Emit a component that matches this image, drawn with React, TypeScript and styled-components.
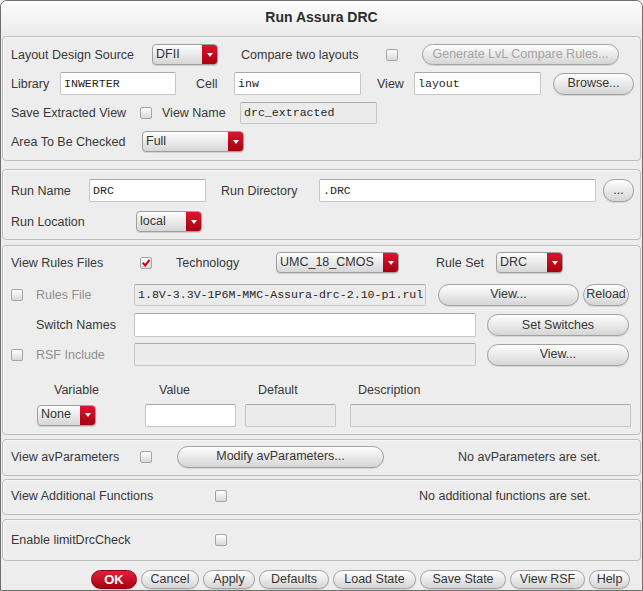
import React from 'react';
import styled, { createGlobalStyle, css } from 'styled-components';

const GlobalStyle = createGlobalStyle`
  html, body {
    margin: 0;
    padding: 0;
    background: #ededed;
    overflow: hidden;
  }
`;

const Window = styled.div`
  width: 643px;
  height: 591px;
  box-sizing: border-box;
  border: 1px solid #6e6e6e;
  border-radius: 7px 7px 0 0;
  background: #ededed;
  overflow: hidden;
  display: flex;
  flex-direction: column;
  font-family: 'Liberation Sans', Arial, sans-serif;
  font-size: 12.5px;
  color: #383838;
`;

const TitleBar = styled.div`
  height: 33px;
  flex: none;
  display: flex;
  align-items: center;
  justify-content: center;
  padding-bottom: 2px;
  box-sizing: border-box;
  background: linear-gradient(#fdfdfd, #ebebeb);
  font-size: 14px;
  font-weight: bold;
  color: #2c2c2c;
`;

const Body = styled.div`
  padding: 2px 1px 0;
  display: flex;
  flex-direction: column;
`;

const Frame = styled.section<{ $h: number; $mt?: number; $pt?: number }>`
  height: ${({ $h }) => $h}px;
  margin-top: ${({ $mt }) => $mt ?? 0}px;
  padding: ${({ $pt }) => $pt ?? 0}px 8px 0;
  box-sizing: border-box;
  border: 1px solid #bdbdbd;
  border-radius: 4px;
  box-shadow: inset 1px 1px 0 #f8f8f8;
  display: flex;
  flex-direction: column;
`;

const Row = styled.div<{ $h: number; $mt?: number }>`
  height: ${({ $h }) => $h}px;
  margin-top: ${({ $mt }) => $mt ?? 0}px;
  display: flex;
  align-items: center;
  flex: none;
`;

const Label = styled.span<{ $w?: number; $ml?: number; $dim?: boolean }>`
  flex: none;
  ${({ $w }) =>
    $w !== undefined &&
    css`
      width: ${$w}px;
    `}
  margin-left: ${({ $ml }) => $ml ?? 0}px;
  white-space: nowrap;
  color: ${({ $dim }) => ($dim ? '#8e8e8e' : '#383838')};
`;

const Field = styled.div<{ $w: number; $h?: number; $ml?: number; $off?: boolean }>`
  flex: none;
  width: ${({ $w }) => $w}px;
  height: ${({ $h }) => $h ?? 23}px;
  margin-left: ${({ $ml }) => $ml ?? 0}px;
  box-sizing: border-box;
  padding: 0 3px;
  border: 1px solid #c6c6c6;
  border-top-color: #a8a8a8;
  border-radius: 2px;
  background: ${({ $off }) => ($off ? '#ebebeb' : '#ffffff')};
  display: flex;
  align-items: center;
  white-space: nowrap;
  overflow: hidden;
  font-family: 'Liberation Mono', 'DejaVu Sans Mono', monospace;
  font-size: 11.6px;
  color: #262626;
`;

const Combo = styled.div<{ $w: number; $ml?: number }>`
  flex: none;
  width: ${({ $w }) => $w}px;
  height: 21px;
  margin-left: ${({ $ml }) => $ml ?? 0}px;
  box-sizing: border-box;
  display: flex;
  border: 1px solid #9e9e9e;
  border-radius: 4px;
  overflow: hidden;
  background: linear-gradient(#fdfdfd, #d6d6d6);
  box-shadow: 0 1px 0 rgba(0, 0, 0, 0.12);
`;

const ComboText = styled.span`
  flex: 1;
  padding: 0 0 2px 3px;
  display: flex;
  align-items: center;
  color: #333;
`;

const ComboArrow = styled.span`
  width: 15px;
  flex: none;
  background: linear-gradient(#dc1430, #a6000e);
  display: flex;
  align-items: center;
  justify-content: center;

  &::after {
    content: '';
    width: 0;
    height: 0;
    border-left: 3.5px solid transparent;
    border-right: 3.5px solid transparent;
    border-top: 4px solid #ffffff;
  }
`;

const Box = styled.span<{ $ml?: number }>`
  flex: none;
  width: 12px;
  height: 12px;
  margin-left: ${({ $ml }) => $ml ?? 0}px;
  box-sizing: border-box;
  border: 1px solid #a4a4a4;
  border-radius: 2px;
  background: linear-gradient(#ffffff, #d8d8d8);
  display: flex;
  align-items: center;
  justify-content: center;
`;

const Button = styled.button<{ $w: number; $h?: number; $ml?: number; $off?: boolean; $primary?: boolean }>`
  flex: none;
  width: ${({ $w }) => $w}px;
  height: ${({ $h }) => $h ?? 22}px;
  margin: 0 0 0 ${({ $ml }) => $ml ?? 0}px;
  padding: 0 0 1px;
  box-sizing: border-box;
  border: 1px solid #a2a2a2;
  border-radius: 11px;
  background: linear-gradient(#fefefe, #d5d5d5);
  box-shadow: 0 1px 0 rgba(0, 0, 0, 0.1);
  font-family: 'Liberation Sans', Arial, sans-serif;
  font-size: 12.5px;
  color: ${({ $off }) => ($off ? '#a3a3a3' : '#363636')};
  white-space: nowrap;
  cursor: default;

  ${({ $primary }) =>
    $primary &&
    css`
      border-color: #8a0010;
      background: linear-gradient(#e3213a, #a9000f);
      color: #ffffff;
      font-weight: bold;
      font-size: 13px;
    `}
`;

const Note = styled.span<{ $ml: number }>`
  margin-left: ${({ $ml }) => $ml}px;
  white-space: nowrap;
  color: #383838;
`;

const ButtonBar = styled.div`
  margin-top: 9px;
  height: 19px;
  display: flex;
  justify-content: flex-end;
  gap: 4px;
  padding-right: 11px;
`;

function Select({ w, ml, value }: { w: number; ml?: number; value: string }) {
  return (
    <Combo $w={w} $ml={ml}>
      <ComboText>{value}</ComboText>
      <ComboArrow />
    </Combo>
  );
}

function Check({ ml, on }: { ml?: number; on?: boolean }) {
  return (
    <Box $ml={ml}>
      {on && (
        <svg width="10" height="10" viewBox="0 0 10 10">
          <path d="M1.8 4.8 L4.2 7.4 L8.6 1.8" fill="none" stroke="#c8001c" strokeWidth="2" />
        </svg>
      )}
    </Box>
  );
}

const footerButtons: [string, number][] = [
  ['Cancel', 58],
  ['Apply', 52],
  ['Defaults', 70],
  ['Load State', 83],
  ['Save State', 86],
  ['View RSF', 75],
  ['Help', 41],
];

export default function App() {
  return (
    <>
      <GlobalStyle />
      <Window>
        <TitleBar>Run Assura DRC</TitleBar>
        <Body>
          <Frame $h={125} $pt={3}>
            <Row $h={29}>
              <Label $w={141}>Layout Design Source</Label>
              <Select w={66} value="DFII" />
              <Label $ml={23} $w={145}>Compare two layouts</Label>
              <Check />
              <Button $w={197} $h={21} $ml={24} $off>
                Generate LvL Compare Rules...
              </Button>
            </Row>
            <Row $h={29}>
              <Label $w={49}>Library</Label>
              <Field $w={116}>INWERTER</Field>
              <Label $ml={20} $w={38}>Cell</Label>
              <Field $w={127}>inw</Field>
              <Label $ml={16} $w={37}>View</Label>
              <Field $w={127}>layout</Field>
              <Button $w={81} $ml={12}>Browse...</Button>
            </Row>
            <Row $h={29}>
              <Label $w={129}>Save Extracted View</Label>
              <Check />
              <Label $ml={10} $w={78}>View Name</Label>
              <Field $w={137} $h={22} $off>drc_extracted</Field>
            </Row>
            <Row $h={29}>
              <Label $w={131}>Area To Be Checked</Label>
              <Select w={102} value="Full" />
            </Row>
          </Frame>

          <Frame $h={71} $mt={8} $pt={5}>
            <Row $h={31}>
              <Label $w={78}>Run Name</Label>
              <Field $w={117}>DRC</Field>
              <Label $ml={15} $w={98}>Run Directory</Label>
              <Field $w={277}>.DRC</Field>
              <Button $w={31} $h={23} $ml={7}>...</Button>
            </Row>
            <Row $h={31}>
              <Label $w={125}>Run Location</Label>
              <Select w={66} value="local" />
            </Row>
          </Frame>

          <Frame $h={190} $mt={5}>
            <Row $h={33}>
              <Label $w={129}>View Rules Files</Label>
              <Check on />
              <Label $ml={24} $w={100}>Technology</Label>
              <Select w={123} value="UMC_18_CMOS" />
              <Label $ml={37} $w={60}>Rule Set</Label>
              <Select w={67} value="DRC" />
            </Row>
            <Row $h={31}>
              <Check />
              <Label $ml={13} $w={98} $dim>Rules File</Label>
              <Field $w={292} $h={22} $off>1.8V-3.3V-1P6M-MMC-Assura-drc-2.10-p1.rul</Field>
              <Button $w={141} $ml={12}>View...</Button>
              <Button $w={46} $ml={4}>Reload</Button>
            </Row>
            <Row $h={30}>
              <Label $ml={25} $w={98}>Switch Names</Label>
              <Field $w={342} $h={24} />
              <Button $w={142} $ml={11}>Set Switches</Button>
            </Row>
            <Row $h={29}>
              <Check />
              <Label $ml={13} $w={98} $dim>RSF Include</Label>
              <Field $w={342} $off />
              <Button $w={142} $ml={11}>View...</Button>
            </Row>
            <Row $h={18} $mt={12}>
              <Label $ml={43} $w={105}>Variable</Label>
              <Label $w={99}>Value</Label>
              <Label $w={100}>Default</Label>
              <Label>Description</Label>
            </Row>
            <Row $h={32}>
              <Select w={59} ml={26} value="None" />
              <Field $w={91} $ml={49} />
              <Field $w={91} $ml={9} $off />
              <Field $w={281} $ml={14} $off />
            </Row>
          </Frame>

          <Frame $h={37} $mt={4}>
            <Row $h={33}>
              <Label $w={129}>View avParameters</Label>
              <Check />
              <Button $w={207} $ml={25}>Modify avParameters...</Button>
              <Note $ml={74}>No avParameters are set.</Note>
            </Row>
          </Frame>

          <Frame $h={36} $mt={3}>
            <Row $h={31}>
              <Label $w={204}>View Additional Functions</Label>
              <Check />
              <Note $ml={192}>No additional functions are set.</Note>
            </Row>
          </Frame>

          <Frame $h={42} $mt={4}>
            <Row $h={40}>
              <Label $w={204}>Enable limitDrcCheck</Label>
              <Check />
            </Row>
          </Frame>

          <ButtonBar>
            <Button $w={46} $h={19} $primary>OK</Button>
            {footerButtons.map(([name, w]) => (
              <Button key={name} $w={w} $h={19}>
                {name}
              </Button>
            ))}
          </ButtonBar>
        </Body>
      </Window>
    </>
  );
}
